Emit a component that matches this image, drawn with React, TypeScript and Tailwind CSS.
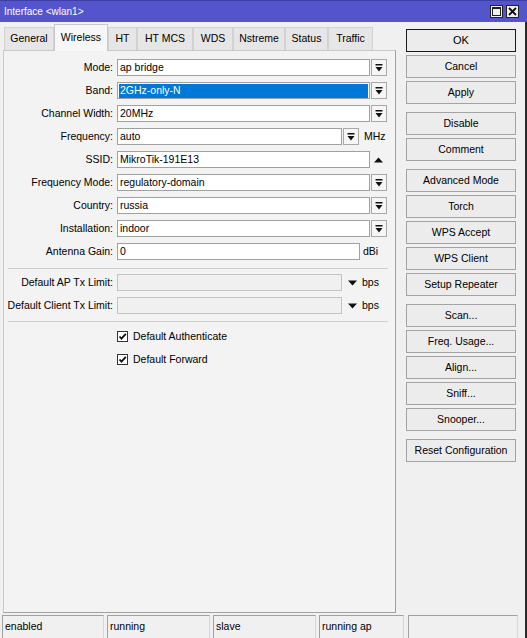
import React from 'react';

const TABS = [
  { name: 'General', w: 'w-[50px]' },
  { name: 'Wireless', w: 'w-[54px]', active: true },
  { name: 'HT', w: 'w-[29px]' },
  { name: 'HT MCS', w: 'w-[56px]' },
  { name: 'WDS', w: 'w-[40px]' },
  { name: 'Nstreme', w: 'w-[52px]' },
  { name: 'Status', w: 'w-[43px]' },
  { name: 'Traffic', w: 'w-[45px]' },
];

const BUTTON_GROUPS = [
  ['OK', 'Cancel', 'Apply'],
  ['Disable', 'Comment'],
  ['Advanced Mode', 'Torch', 'WPS Accept', 'WPS Client', 'Setup Repeater'],
  ['Scan...', 'Freq. Usage...', 'Align...', 'Sniff...', 'Snooper...'],
  ['Reset Configuration'],
];

const STATUS = [
  { text: 'enabled', w: 'w-[102px]' },
  { text: 'running', w: 'w-[103px]' },
  { text: 'slave', w: 'w-[103px]' },
  { text: 'running ap', w: 'w-[85px]' },
  { text: '', w: 'ml-px w-[110px]' },
];

function DropIcon() {
  return (
    <svg width="8" height="8" viewBox="0 0 8 8">
      <rect x="0.5" y="0" width="7" height="1.5" fill="#111" />
      <path d="M0.5 3h7L4 7.5z" fill="#111" />
    </svg>
  );
}

function DropBtn() {
  return (
    <div className="ml-px flex h-[17px] w-[16px] items-center justify-center border border-[#a8a8a8] bg-[#f6f6f6]">
      <DropIcon />
    </div>
  );
}

function Label({ children }: { children: React.ReactNode }) {
  return <div className="w-[109px] shrink-0 text-right whitespace-nowrap">{children}</div>;
}

function Field({ value, w = 'w-[253px]', selected }: { value: string; w?: string; selected?: boolean }) {
  return (
    <div className={`${w} flex h-[17px] items-center border border-[#a0a0a0] bg-white px-px`}>
      {selected ? (
        <span className="flex h-[14px] w-full items-center bg-[#0078d7] pl-px text-white">{value}</span>
      ) : (
        <span className="pl-px">{value}</span>
      )}
    </div>
  );
}

function Row({ label, children }: { label: string; children: React.ReactNode }) {
  return (
    <div className="flex h-[17px] items-center">
      <Label>{label}:</Label>
      <div className="ml-[4px] flex items-center">{children}</div>
    </div>
  );
}

function Check({ label }: { label: string }) {
  return (
    <div className="flex h-[17px] items-center pl-[113px]">
      <div className="flex h-[11px] w-[11px] items-center justify-center border border-[#333] bg-white">
        <svg width="9" height="9" viewBox="0 0 9 9">
          <path d="M1.5 4.5l2 2.2L7.8 1.8" stroke="#111" strokeWidth="1.8" fill="none" />
        </svg>
      </div>
      <span className="ml-[5px]">{label}</span>
    </div>
  );
}

export default function App() {
  return (
    <div className="flex h-[638px] w-[527px] flex-col overflow-hidden bg-[#f0f0f0] font-['Liberation_Sans',Arial,sans-serif] text-[10.5px] text-black">
      <div className="flex h-[22px] items-center justify-between border-t border-[#3e3ea8] bg-[#5454cc] pl-[4px] pr-[8px] text-[10px] text-white">
        <span>Interface &lt;wlan1&gt;</span>
        <div className="flex gap-[3px]">
          <div className="flex h-[13px] w-[13px] items-center justify-center border border-[#222] bg-[#f0f0f0]">
            <svg width="9" height="9" viewBox="0 0 9 9">
              <rect x="0.5" y="0.5" width="8" height="8" fill="none" stroke="#222" />
              <rect x="0.5" y="0.5" width="8" height="1.5" fill="#222" />
            </svg>
          </div>
          <div className="flex h-[13px] w-[13px] items-center justify-center border border-[#222] bg-[#f0f0f0]">
            <svg width="9" height="9" viewBox="0 0 9 9">
              <path d="M1 1l7 7M8 1l-7 7" stroke="#111" strokeWidth="1.8" />
            </svg>
          </div>
        </div>
      </div>

      <div className="flex flex-1 border-r-2 border-[#2a2a2a]">
        <div className="ml-[3px] flex w-[393px] flex-col">
          <div className="flex h-[28px] items-end pl-px">
            {TABS.map((t) =>
              t.active ? (
                <div
                  key={t.name}
                  className={`${t.w} -mb-px z-10 flex h-[27px] items-start justify-center border border-b-0 border-[#c9c9c9] bg-[#f7f7f7] pt-[5px]`}
                >
                  {t.name}
                </div>
              ) : (
                <div
                  key={t.name}
                  className={`${t.w} flex h-[23px] items-center justify-center border border-b-0 border-[#d2d2d2] bg-[#e6e6e6]`}
                >
                  {t.name}
                </div>
              ),
            )}
          </div>

          <div className="mb-[2px] flex flex-1 flex-col border border-[#c9c9c9] border-r-[#a0a0a0] border-b-[#a0a0a0] bg-[#f3f3f3] pt-[8px]">
            <div className="flex flex-col gap-[6px]">
              <Row label="Mode">
                <Field value="ap bridge" />
                <DropBtn />
              </Row>
              <Row label="Band">
                <Field value="2GHz-only-N" selected />
                <DropBtn />
              </Row>
              <Row label="Channel Width">
                <Field value="20MHz" />
                <DropBtn />
              </Row>
              <Row label="Frequency">
                <Field value="auto" w="w-[225px]" />
                <DropBtn />
                <span className="ml-[5px]">MHz</span>
              </Row>
              <Row label="SSID">
                <Field value="MikroTik-191E13" />
                <div className="flex w-[17px] justify-center">
                  <svg width="9" height="6" viewBox="0 0 9 6">
                    <path d="M0 5.5h9L4.5 0.5z" fill="#111" />
                  </svg>
                </div>
              </Row>
              <Row label="Frequency Mode">
                <Field value="regulatory-domain" />
                <DropBtn />
              </Row>
              <Row label="Country">
                <Field value="russia" />
                <DropBtn />
              </Row>
              <Row label="Installation">
                <Field value="indoor" />
                <DropBtn />
              </Row>
              <Row label="Antenna Gain">
                <Field value="0" w="w-[243px]" />
                <span className="ml-[3px]">dBi</span>
              </Row>
            </div>

            <div className="mx-[4px] mt-[8px] h-px w-[380px] bg-[#cfcfcf]" />

            <div className="mt-[5px] flex flex-col gap-[6px]">
              {['Default AP Tx Limit', 'Default Client Tx Limit'].map((l) => (
                <Row key={l} label={l}>
                  <div className="h-[17px] w-[225px] border border-[#c4c4c4] bg-[#f0f0f0]" />
                  <div className="flex w-[20px] justify-center">
                    <svg width="9" height="6" viewBox="0 0 9 6">
                      <path d="M0 0.5h9L4.5 5.5z" fill="#111" />
                    </svg>
                  </div>
                  <span>bps</span>
                </Row>
              ))}
            </div>

            <div className="mx-[4px] mt-[7px] h-px w-[380px] bg-[#cfcfcf]" />

            <div className="mt-[6px] flex flex-col gap-[6px]">
              <Check label="Default Authenticate" />
              <Check label="Default Forward" />
            </div>
          </div>
        </div>

        <div className="ml-[10px] flex w-[110px] flex-col gap-[8px] pt-[7px]">
          {BUTTON_GROUPS.map((g, gi) => (
            <div key={gi} className="flex flex-col gap-[3px]">
              {g.map((b) => (
                <div
                  key={b}
                  className={`flex h-[23px] items-center justify-center border bg-[#ececec] ${
                    b === 'OK' ? 'border-[#1a1a1a] text-[11px]' : 'border-[#a3a3a3]'
                  }`}
                >
                  {b}
                </div>
              ))}
            </div>
          ))}
        </div>
      </div>

      <div className="flex h-[23px] gap-[3px] border-r-2 border-[#2a2a2a] pl-[2px]">
        {STATUS.map((s, i) => (
          <div
            key={i}
            className={`${s.w} flex items-center border-t border-l border-r border-[#a0a0a0] border-r-[#d6d6d6] pl-[2px]`}
          >
            {s.text}
          </div>
        ))}
      </div>
    </div>
  );
}
